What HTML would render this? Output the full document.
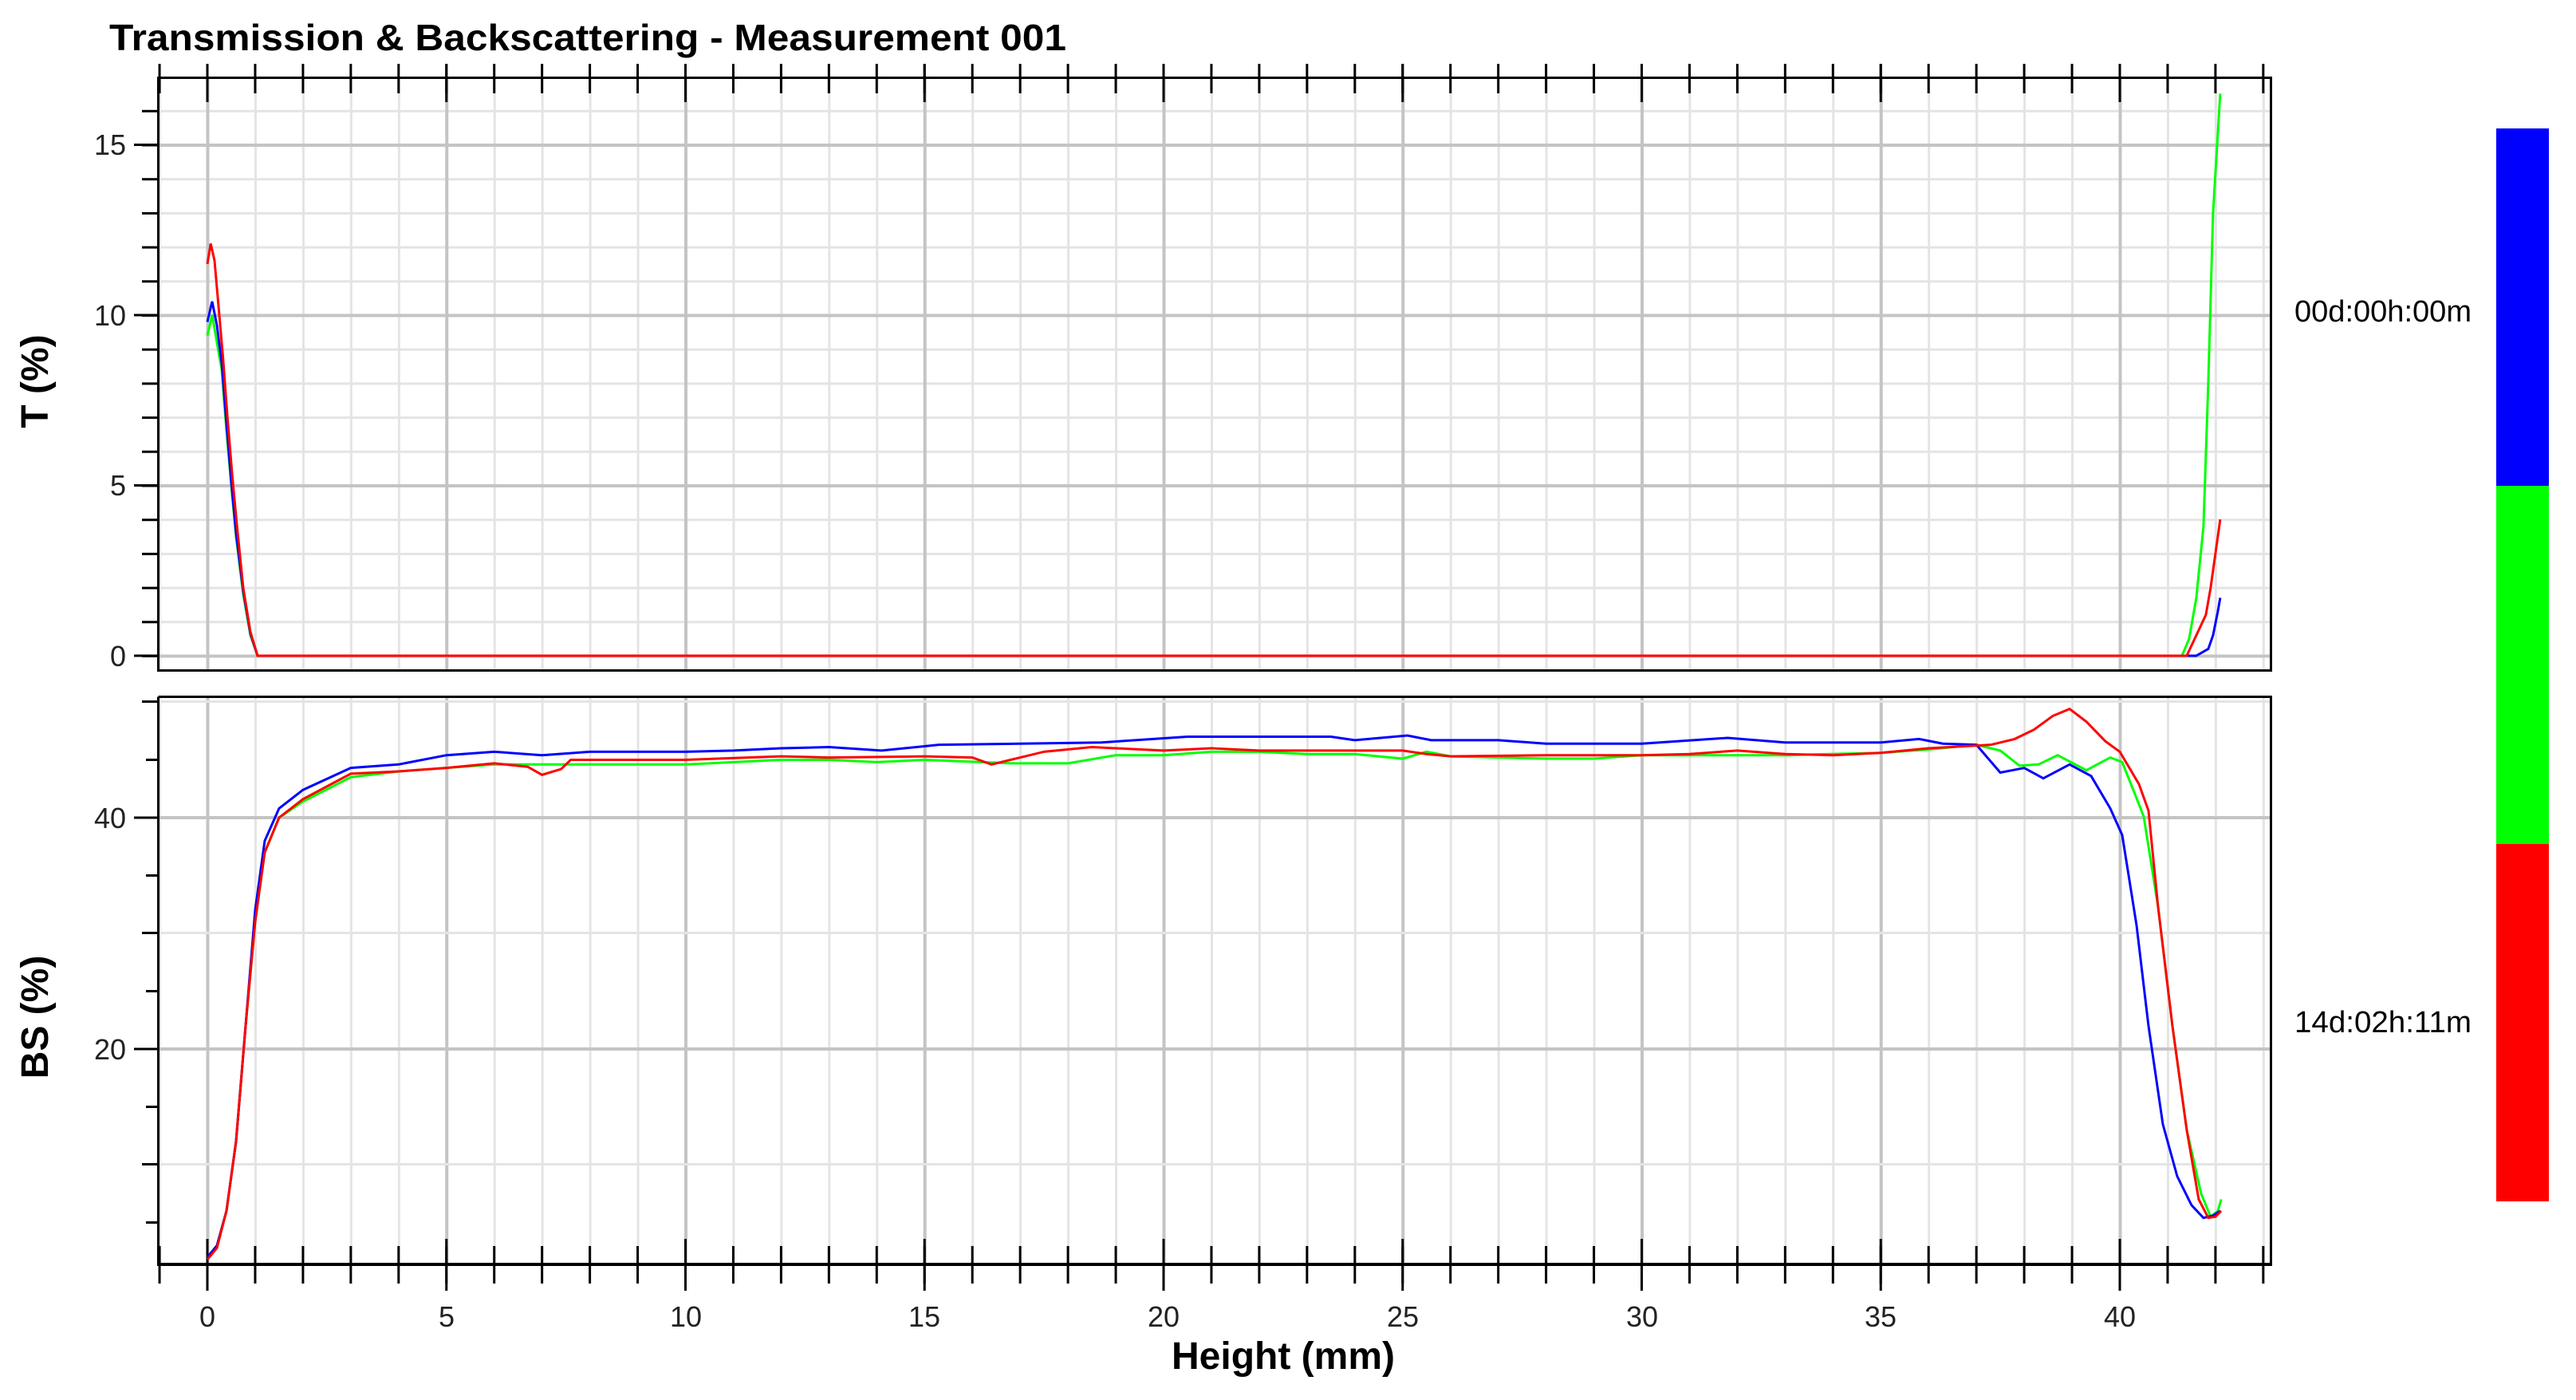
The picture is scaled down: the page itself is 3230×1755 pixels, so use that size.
<!DOCTYPE html>
<html><head><meta charset="utf-8"><style>
html,body{margin:0;padding:0;background:#fff;}
svg{display:block;}
text{font-family:"Liberation Sans",Arial,sans-serif;}
</style></head><body>
<svg width="3230" height="1755" viewBox="0 0 3230 1755" xmlns="http://www.w3.org/2000/svg">
<defs>
<pattern id="vmin" patternUnits="userSpaceOnUse" x="259" y="0" width="59.95" height="10"><rect x="0" y="0" width="3" height="10" fill="#e4e4e4"/></pattern>
<pattern id="vmaj" patternUnits="userSpaceOnUse" x="258.5" y="0" width="299.75" height="10"><rect x="0" y="0" width="4" height="10" fill="#c4c4c4"/></pattern>
<pattern id="hminT" patternUnits="userSpaceOnUse" x="0" y="821" width="10" height="42.7"><rect x="0" y="0" width="10" height="3" fill="#e4e4e4"/></pattern>
<pattern id="hmajT" patternUnits="userSpaceOnUse" x="0" y="820.5" width="10" height="213.5"><rect x="0" y="0" width="10" height="4" fill="#c4c4c4"/></pattern>
<pattern id="tick" patternUnits="userSpaceOnUse" x="258.5" y="0" width="59.95" height="10"><rect x="0" y="0" width="3" height="10" fill="#000"/></pattern>
<pattern id="tickMaj" patternUnits="userSpaceOnUse" x="258.5" y="0" width="299.75" height="10"><rect x="0" y="0" width="3" height="10" fill="#000"/></pattern>
<pattern id="ytickT" patternUnits="userSpaceOnUse" x="0" y="821" width="10" height="42.7"><rect x="0" y="0" width="10" height="3" fill="#000"/></pattern>
</defs>

<text x="137" y="63" font-size="46" font-weight="bold" textLength="1200" lengthAdjust="spacingAndGlyphs">Transmission &amp; Backscattering - Measurement 001</text>

<rect x="200" y="99" width="2646" height="740" fill="url(#vmin)"/>
<rect x="200" y="99" width="2646" height="740" fill="url(#hminT)"/>
<rect x="200" y="99" width="2646" height="740" fill="url(#vmaj)"/>
<rect x="200" y="99" width="2646" height="740" fill="url(#hmajT)"/>

<rect x="200" y="875" width="2646" height="708" fill="url(#vmin)"/>
<rect x="200" y="875" width="2646" height="708" fill="url(#vmaj)"/>
<g fill="#e4e4e4"><rect x="200" y="878" width="2646" height="3"/><rect x="200" y="1168" width="2646" height="3"/><rect x="200" y="1458" width="2646" height="3"/></g>
<g fill="#c4c4c4"><rect x="200" y="1023" width="2646" height="4"/><rect x="200" y="1313" width="2646" height="4"/></g>

<rect x="198.5" y="97.5" width="2649" height="743" fill="none" stroke="#000" stroke-width="3"/>
<path d="M198.5 873.5H2847.5V1585M198.5 873.5V1585" fill="none" stroke="#000" stroke-width="3"/>
<rect x="197" y="1583" width="2652" height="4" fill="#000"/>

<rect x="198" y="80" width="2650" height="37" fill="url(#tick)"/>
<rect x="198" y="80" width="2650" height="48" fill="url(#tickMaj)"/>
<rect x="198" y="1562" width="2650" height="47" fill="url(#tick)"/>
<rect x="198" y="1553" width="2650" height="65" fill="url(#tickMaj)"/>

<rect x="178" y="130" width="20" height="700" fill="url(#ytickT)"/>
<g fill="#000"><rect x="168" y="820.5" width="30" height="3"/><rect x="168" y="607" width="30" height="3"/><rect x="168" y="393.5" width="30" height="3"/><rect x="168" y="180" width="30" height="3"/></g>
<g fill="#000">
<rect x="178" y="878" width="20" height="3"/><rect x="183" y="951" width="15" height="3"/><rect x="168" y="1023.5" width="30" height="3"/>
<rect x="183" y="1096" width="15" height="3"/><rect x="178" y="1168" width="20" height="3"/><rect x="183" y="1241" width="15" height="3"/>
<rect x="168" y="1313.5" width="30" height="3"/><rect x="183" y="1386" width="15" height="3"/><rect x="178" y="1458" width="20" height="3"/><rect x="183" y="1531" width="15" height="3"/>
</g>

<g font-size="36" text-anchor="end" fill="#222">
<text x="158" y="835">0</text><text x="158" y="621">5</text><text x="158" y="408">10</text><text x="158" y="194">15</text>
<text x="158" y="1038">40</text><text x="158" y="1328">20</text>
</g>
<g font-size="36" text-anchor="middle" fill="#222">
<text x="260" y="1663">0</text><text x="560" y="1663">5</text><text x="860" y="1663">10</text><text x="1159" y="1663">15</text><text x="1459" y="1663">20</text><text x="1759" y="1663">25</text><text x="2059" y="1663">30</text><text x="2358" y="1663">35</text><text x="2658" y="1663">40</text>
</g>

<text x="1609" y="1716" font-size="48" font-weight="bold" text-anchor="middle">Height (mm)</text>
<text transform="translate(60,478) rotate(-90)" font-size="48" font-weight="bold" text-anchor="middle">T (%)</text>
<text transform="translate(60,1275) rotate(-90)" font-size="48" font-weight="bold" text-anchor="middle">BS (%)</text>

<g transform="translate(260,822) scale(59.95,-42.7)" fill="none" stroke-width="3">
<polyline vector-effect="non-scaling-stroke" stroke="#00ff00" points="0,9.4 0.1,10 0.2,9.2 0.3,8.4 0.4,6.6 0.5,5 0.6,3.5 0.75,1.8 0.9,0.6 1.05,0 41.3,0 41.45,0.5 41.6,1.7 41.75,3.8 41.85,8 41.95,13 42.1,16.5"/>
<polyline vector-effect="non-scaling-stroke" stroke="#0000ff" points="0,9.8 0.1,10.4 0.2,9.7 0.3,8.6 0.4,6.8 0.5,5.1 0.6,3.6 0.75,1.9 0.9,0.65 1.05,0 41.6,0 41.85,0.2 41.95,0.6 42.05,1.3 42.1,1.7"/>
<polyline vector-effect="non-scaling-stroke" stroke="#ff0000" points="0,11.5 0.07,12.1 0.15,11.6 0.25,10 0.33,8.7 0.42,7 0.52,5.3 0.62,3.8 0.75,2 0.9,0.7 1.05,0 41.4,0 41.6,0.6 41.8,1.2 41.9,2 42.0,3 42.1,4"/>
</g>

<g transform="translate(260,1605) scale(59.95,-14.5)" fill="none" stroke-width="3">
<polyline vector-effect="non-scaling-stroke" stroke="#00ff00" points="0,2 0.2,3 0.4,6 0.6,12 0.8,22 1,31 1.2,37 1.5,40 2,41.4 3,43.5 4,44 5,44.3 6,44.6 7,44.6 8,44.6 10,44.6 12,45 13,45 14,44.8 15,45 16.8,44.7 18,44.7 19,45.4 20,45.4 21,45.7 22,45.7 23,45.5 24,45.5 25,45.1 25.5,45.7 26,45.3 28,45.1 29,45.1 30,45.4 33,45.4 35,45.6 36,45.9 37,46.3 37.5,45.8 37.9,44.5 38.3,44.6 38.7,45.4 39.3,44.1 39.8,45.2 40.05,44.8 40.3,42.2 40.5,40.1 40.8,32.3 41.1,22 41.4,13 41.7,7.5 41.9,5.5 42.05,6 42.12,7"/>
<polyline vector-effect="non-scaling-stroke" stroke="#0000ff" points="0,2 0.2,3 0.4,6 0.6,12 0.8,22 1,32 1.2,38 1.5,40.8 2,42.4 3,44.3 4,44.6 5,45.4 6,45.7 7,45.4 8,45.7 10,45.7 11,45.8 12,46 13,46.1 14.1,45.8 15.3,46.3 18.7,46.5 20.5,47 23.5,47 24,46.7 25.1,47.1 25.6,46.7 27,46.7 28,46.4 30,46.4 31.8,46.9 33,46.5 35,46.5 35.8,46.8 36.3,46.4 37,46.3 37.5,43.9 38,44.3 38.4,43.4 38.95,44.6 39.4,43.6 39.8,40.8 40.05,38.5 40.35,30.7 40.6,22 40.9,13.5 41.2,9 41.5,6.5 41.75,5.4 41.95,5.6 42.1,6"/>
<polyline vector-effect="non-scaling-stroke" stroke="#ff0000" points="0,1.8 0.2,2.8 0.4,6 0.6,12 0.8,22 1,31 1.2,37 1.5,40 2,41.6 3,43.8 4,44 5,44.3 6,44.7 6.7,44.4 7,43.7 7.4,44.2 7.6,45 10,45 12,45.3 13,45.2 15,45.3 16,45.2 16.4,44.6 16.9,45.1 17.5,45.7 18.5,46.1 20,45.8 21,46 22,45.8 25,45.8 25.5,45.5 26,45.3 28,45.4 30,45.4 31,45.5 32,45.8 33,45.5 34,45.4 35,45.6 36,46 37.3,46.3 37.8,46.8 38.2,47.6 38.6,48.8 38.95,49.4 39.3,48.3 39.7,46.6 40,45.7 40.4,42.9 40.6,40.6 40.8,32.3 41.1,22 41.4,13 41.65,7 41.85,5.4 42.0,5.5 42.12,6"/>
</g>

<rect x="3130" y="161" width="66" height="448" fill="#0000ff"/>
<rect x="3130" y="609" width="66" height="449" fill="#00ff00"/>
<rect x="3130" y="1058" width="66" height="448" fill="#ff0000"/>
<text x="2877" y="403" font-size="38" textLength="222" lengthAdjust="spacingAndGlyphs">00d:00h:00m</text>
<text x="2877" y="1294" font-size="38" textLength="222" lengthAdjust="spacingAndGlyphs">14d:02h:11m</text>
</svg>
</body></html>
